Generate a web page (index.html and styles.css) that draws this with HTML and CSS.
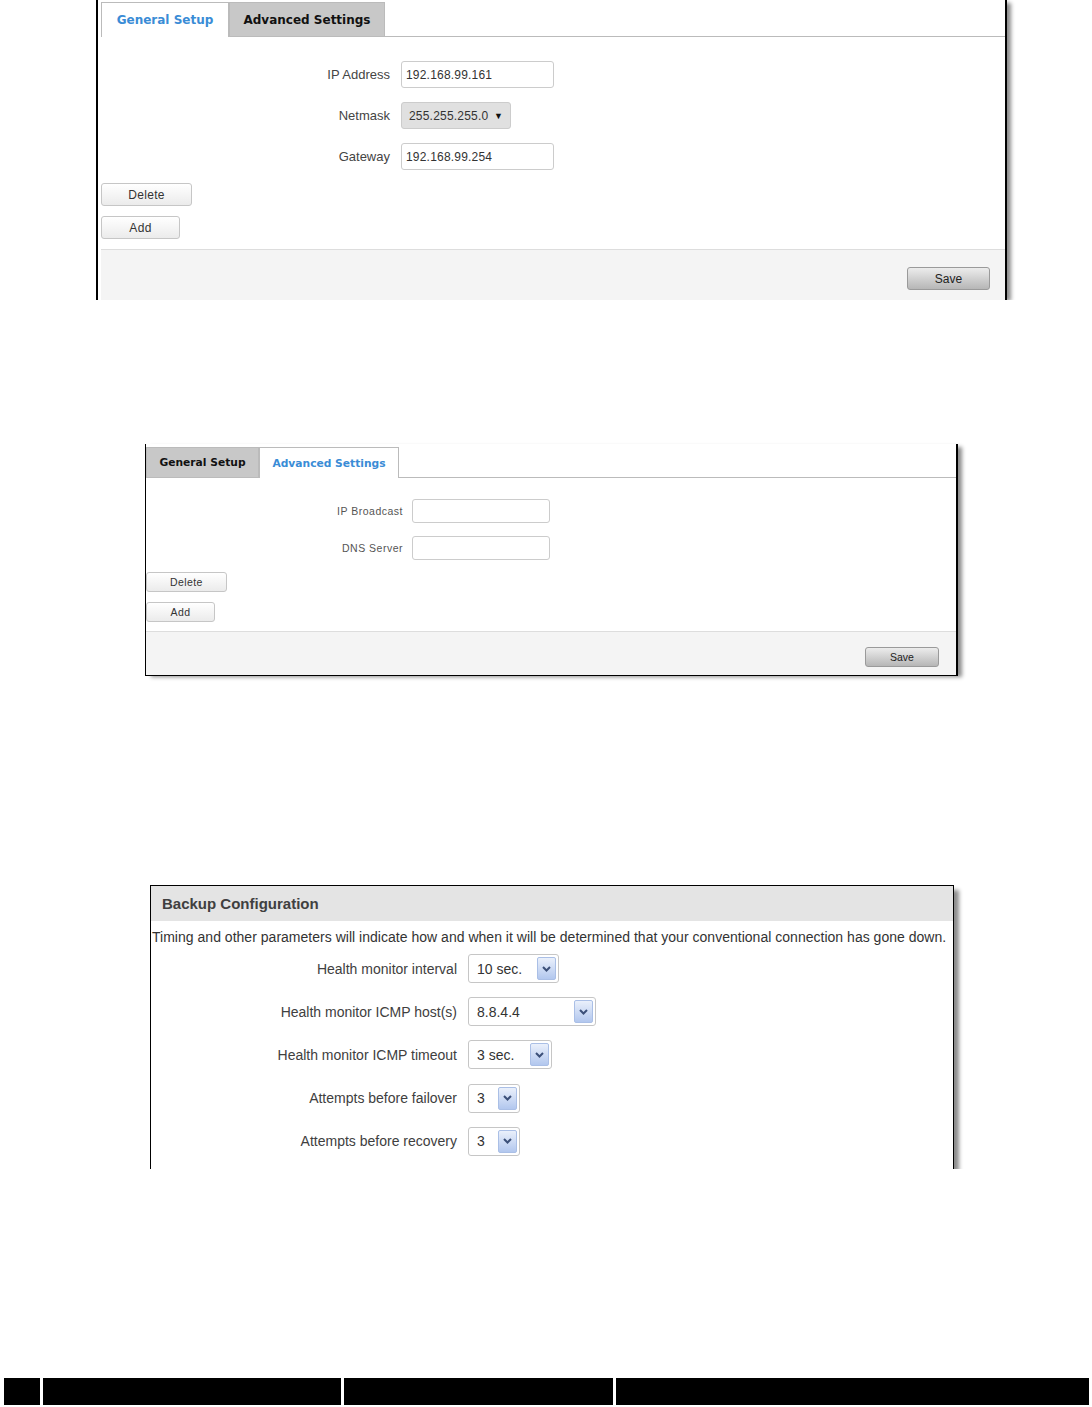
FILE: index.html
```html
<!DOCTYPE html>
<html lang="en">
<head>
	<meta charset="UTF-8">
	<title>WAN backup settings</title>
	<link rel="stylesheet" href="styles.css">
</head>
<body>
<!-- general setup tab -->
	<div class="crop crop-general">
	<div class="shot shot-general">
		<div class="tabs">
			<span class="tab tab-general active">General Setup</span>
			<span class="tab tab-advanced">Advanced Settings</span>
		</div>
		<div class="fields">
			<div class="field"><span class="label">IP Address</span><span class="input">192.168.99.161</span></div>
			<div class="field"><span class="label">Netmask</span><span class="dropdown">255.255.255.0<i class="caret">&#9660;</i></span></div>
			<div class="field"><span class="label">Gateway</span><span class="input">192.168.99.254</span></div>
		</div>
		<div class="actions">
			<button class="btn btn-delete">Delete</button>
			<button class="btn btn-add">Add</button>
		</div>
		<div class="footer"><button class="btn-save">Save</button></div>
	</div>
	</div>

<!-- advanced settings tab -->
	<div class="shot shot-advanced">
		<div class="tabs">
			<span class="tab tab-general">General Setup</span>
			<span class="tab tab-advanced active">Advanced Settings</span>
		</div>
		<div class="fields">
			<div class="field"><span class="label">IP Broadcast</span><span class="input"></span></div>
			<div class="field"><span class="label">DNS Server</span><span class="input"></span></div>
		</div>
		<div class="actions">
			<button class="btn btn-delete">Delete</button>
			<button class="btn btn-add">Add</button>
		</div>
		<div class="footer"><button class="btn-save">Save</button></div>
	</div>

<!-- backup configuration -->
	<div class="crop crop-backup">
	<div class="shot shot-backup">
		<div class="backup-title">Backup Configuration</div>
		<p class="backup-desc">Timing and other parameters will indicate how and when it will be determined that your conventional connection has gone down.</p>
		<div class="backup-rows">
			<div class="row"><span class="label">Health monitor interval</span><span class="select w-interval">10 sec.<i class="arrow"><svg width="9" height="6" viewBox="0 0 9 6"><polyline points="1,1 4.5,4.5 8,1" fill="none" stroke="#3c5079" stroke-width="2"/></svg></i></span></div>
			<div class="row"><span class="label">Health monitor ICMP host(s)</span><span class="select w-host">8.8.4.4<i class="arrow"><svg width="9" height="6" viewBox="0 0 9 6"><polyline points="1,1 4.5,4.5 8,1" fill="none" stroke="#3c5079" stroke-width="2"/></svg></i></span></div>
			<div class="row"><span class="label">Health monitor ICMP timeout</span><span class="select w-timeout">3 sec.<i class="arrow"><svg width="9" height="6" viewBox="0 0 9 6"><polyline points="1,1 4.5,4.5 8,1" fill="none" stroke="#3c5079" stroke-width="2"/></svg></i></span></div>
			<div class="row"><span class="label">Attempts before failover</span><span class="select w-small">3<i class="arrow"><svg width="9" height="6" viewBox="0 0 9 6"><polyline points="1,1 4.5,4.5 8,1" fill="none" stroke="#3c5079" stroke-width="2"/></svg></i></span></div>
			<div class="row"><span class="label">Attempts before recovery</span><span class="select w-small">3<i class="arrow"><svg width="9" height="6" viewBox="0 0 9 6"><polyline points="1,1 4.5,4.5 8,1" fill="none" stroke="#3c5079" stroke-width="2"/></svg></i></span></div>
		</div>
	</div>
	</div>

<!-- page footer bar -->
	<div class="pagebar">
		<span class="cell c1"></span>
		<span class="cell c2"></span>
		<span class="cell c3"></span>
		<span class="cell c4"></span>
	</div>
</body>
</html>
```
FILE: styles.css
```css
*{
	margin:0;
	padding:0;
	box-sizing:border-box;
}
body{
	background:#fff;
	font-family:"Liberation Sans", Arial, sans-serif;
	color:#333;
	width:1092px;
	height:1407px;
	overflow:hidden;
}
/* screenshots cut off at the bottom: clip the shadow there */
.crop{
	overflow:hidden;
	padding-right:12px;
}
.crop-general{
	margin-left:96px;
	width:923px;
	height:300px;
}
.crop-backup{
	margin:209px 0 0 150px;
	width:816px;
	height:284px;
}
.shot{
	overflow:hidden;
	background:#fff;
}
/* tabs */
.tabs{
	display:flex;
	border-bottom:1px solid #bbb;
	font-family:"DejaVu Sans", sans-serif;
	font-weight:bold;
}
.tab{
	display:flex;
	align-items:center;
	justify-content:center;
	background:#c8c8c8;
	border:1px solid #bbb;
	border-bottom:none;
	color:#111;
}
.tab.active{
	background:#fff;
	color:#3a8cd6;
	margin-bottom:-1px;
}
.fields .field{
	display:flex;
	align-items:center;
}
.label{
	text-align:right;
}
.input,.dropdown{
	display:flex;
	align-items:center;
	border:1px solid #ccc;
	border-radius:3px;
	background:#fff;
	color:#333;
}
.dropdown{
	background:#e0e0e0;
	justify-content:space-between;
}
.caret{
	font-style:normal;
	font-size:9px;
	color:#111;
}
.actions{
	display:flex;
	flex-direction:column;
	align-items:flex-start;
}
.btn,.btn-save{
	font-family:"Liberation Sans", Arial, sans-serif;
	border-radius:3px;
	color:#333;
}
.btn{
	background:linear-gradient(#fff,#ebebeb);
	border:1px solid #c6c6c6;
}
.btn-save{
	background:linear-gradient(#ececec,#b6b6b6);
	border:1px solid #9a9a9a;
	color:#222;
}
.footer{
	display:flex;
	justify-content:flex-end;
	background:#f4f4f4;
	border-top:1px solid #ddd;
}

/* first picture: general setup */
.shot-general{
	width:911px;
	height:300px;
	border-left:2px solid #000;
	border-right:2px solid #000;
	padding:2px 0 0 3px;
	box-shadow:5px 2px 4px -1px rgba(0,0,0,.45);
}
.shot-general .tabs{
	height:35px;
}
.shot-general .tab{
	height:34px;
	font-size:12px;
}
.shot-general .tab.active{
	height:35px;
}
.shot-general .tab-general{
	width:128px;
}
.shot-general .tab-advanced{
	width:156px;
}
.shot-general .fields{
	display:flex;
	flex-direction:column;
	gap:14px;
	margin-top:24px;
}
.shot-general .label{
	width:289px;
	margin-right:11px;
	font-size:13px;
	color:#444;
}
.shot-general .input{
	width:153px;
	height:27px;
	padding-left:4px;
	font-size:12px;
	letter-spacing:.2px;
}
.shot-general .dropdown{
	width:110px;
	height:27px;
	padding:0 7px 0 7px;
	font-size:12px;
	letter-spacing:.2px;
}
.shot-general .actions{
	gap:10px;
	margin-top:13px;
}
.shot-general .btn{
	height:23px;
	font-size:12px;
	letter-spacing:.3px;
}
.shot-general .btn-delete{
	width:91px;
}
.shot-general .btn-add{
	width:79px;
}
.shot-general .footer{
	margin-top:10px;
	height:60px;
	padding:17px 15px 0 0;
	align-items:flex-start;
}
.shot-general .btn-save{
	width:83px;
	height:23px;
	font-size:12px;
}

/* second picture: advanced settings */
.shot-advanced{
	margin:144px 0 0 145px;
	width:813px;
	height:232px;
	border-left:1px solid #000;
	border-right:2px solid #000;
	border-bottom:1px solid #000;
	padding-top:3px;
	box-shadow:5px 2px 4px -1px rgba(0,0,0,.45);
	display:flex;
	flex-direction:column;
}
.shot-advanced .tabs{
	height:31px;
}
.shot-advanced .tab{
	height:30px;
	font-size:10.7px;
}
.shot-advanced .tab.active{
	height:31px;
}
.shot-advanced .tab-general{
	width:113px;
}
.shot-advanced .tab-advanced{
	width:140px;
}
.shot-advanced .fields{
	display:flex;
	flex-direction:column;
	gap:13px;
	margin-top:21px;
}
.shot-advanced .label{
	width:257px;
	margin-right:9px;
	font-size:10.5px;
	letter-spacing:.5px;
	color:#555;
}
.shot-advanced .input{
	width:138px;
	height:24px;
}
.shot-advanced .actions{
	gap:10px;
	margin-top:12px;
}
.shot-advanced .btn{
	height:20px;
	font-size:10.5px;
	letter-spacing:.4px;
}
.shot-advanced .btn-delete{
	width:81px;
}
.shot-advanced .btn-add{
	width:69px;
}
.shot-advanced .footer{
	margin-top:9px;
	flex:1;
	padding:15px 17px 0 0;
	align-items:flex-start;
}
.shot-advanced .btn-save{
	width:74px;
	height:20px;
	font-size:10.5px;
}

/* third picture: backup configuration */
.shot-backup{
	width:804px;
	height:284px;
	border:1px solid #000;
	border-bottom:none;
	box-shadow:6px 4px 4px -1px rgba(0,0,0,.45);
	color:#404040;
}
.backup-title{
	height:35px;
	line-height:35px;
	padding-left:11px;
	background:#e4e4e4;
	font-size:15px;
	font-weight:bold;
}
.backup-desc{
	margin-top:6px;
	line-height:20px;
	font-size:14px;
	letter-spacing:.02px;
	padding-left:1px;
	color:#333;
}
.backup-rows{
	display:flex;
	flex-direction:column;
	gap:14.2px;
	margin-top:7px;
}
.row{
	display:flex;
	align-items:center;
	font-size:14px;
}
.row .label{
	width:306px;
	margin-right:11px;
	color:#404040;
}
.select{
	position:relative;
	display:flex;
	align-items:center;
	height:29px;
	padding-left:8px;
	border:1px solid #c6c6c6;
	border-radius:3px;
	background:#fff;
	color:#333;
}
.arrow{
	position:absolute;
	right:2px;
	top:2px;
	bottom:2px;
	width:19px;
	display:flex;
	align-items:center;
	justify-content:center;
	border:1px solid #aabfe6;
	border-radius:2px;
	background:linear-gradient(#eaf0fb,#b2c7ee);
}
.w-interval{
	width:91px;
}
.w-host{
	width:128px;
}
.w-timeout{
	width:84px;
}
.w-small{
	width:52px;
}

/* black bar at the bottom */
.pagebar{
	display:flex;
	gap:3px;
	margin:209px 0 0 4px;
	height:27px;
}
.cell{
	background:#000;
}
.c1{
	width:36px;
}
.c2{
	width:298px;
}
.c3{
	width:269px;
}
.c4{
	width:473px;
}
```
